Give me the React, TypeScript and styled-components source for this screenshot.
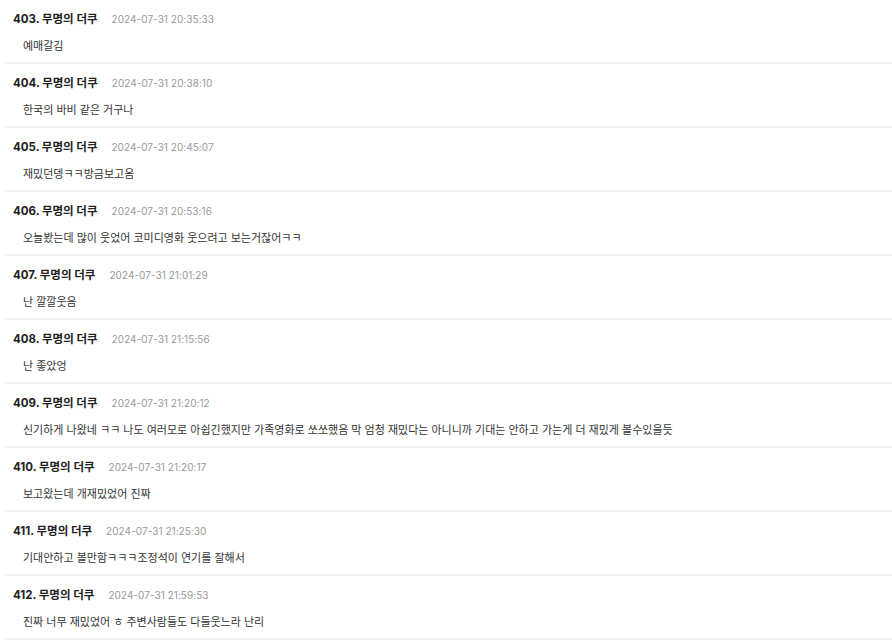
import React from 'react';
import styled, { createGlobalStyle } from 'styled-components';

type Comment = {
  no: number;
  author: string;
  date: string;
  body: string;
};

const comments: Comment[] = [
  { no: 403, author: '무명의 더쿠', date: '2024-07-31 20:35:33', body: '예매갈김' },
  { no: 404, author: '무명의 더쿠', date: '2024-07-31 20:38:10', body: '한국의 바비 같은 거구나' },
  { no: 405, author: '무명의 더쿠', date: '2024-07-31 20:45:07', body: '재밌던뎅ㅋㅋ방금보고옴' },
  { no: 406, author: '무명의 더쿠', date: '2024-07-31 20:53:16', body: '오늘봤는데 많이 웃었어 코미디영화 웃으려고 보는거잖어ㅋㅋ' },
  { no: 407, author: '무명의 더쿠', date: '2024-07-31 21:01:29', body: '난 깔깔웃음' },
  { no: 408, author: '무명의 더쿠', date: '2024-07-31 21:15:56', body: '난 좋았엉' },
  {
    no: 409,
    author: '무명의 더쿠',
    date: '2024-07-31 21:20:12',
    body: '신기하게 나왔네 ㅋㅋ 나도 여러모로 아쉽긴했지만 가족영화로 쏘쏘했음 막 엄청 재밌다는 아니니까 기대는 안하고 가는게 더 재밌게 볼수있을듯',
  },
  { no: 410, author: '무명의 더쿠', date: '2024-07-31 21:20:17', body: '보고왔는데 개재밌었어 진짜' },
  { no: 411, author: '무명의 더쿠', date: '2024-07-31 21:25:30', body: '기대안하고 볼만함ㅋㅋㅋ조정석이 연기를 잘해서' },
  { no: 412, author: '무명의 더쿠', date: '2024-07-31 21:59:53', body: '진짜 너무 재밌었어 ㅎ 주변사람들도 다들웃느라 난리' },
];

const GlobalStyle = createGlobalStyle`
  body {
    margin: 0;
    background: #ffffff;
    font-family: Inter, 'Noto Sans CJK KR', sans-serif;
  }
`;

const List = styled.ul`
  list-style: none;
  margin: 0 0 0 4px;
  padding: 0;
`;

const Item = styled.li`
  height: 64px;
  box-sizing: border-box;
  padding: 10px 0 0 9px;
  border-bottom: 2px solid #f3f3f3;
`;

const Header = styled.div`
  display: flex;
  align-items: baseline;
  gap: 14px;
  height: 18px;
  line-height: 18px;
`;

const Author = styled.span`
  font-size: 11.5px;
  font-weight: 700;
  color: #222222;
`;

const Date = styled.span`
  font-size: 10px;
  letter-spacing: 0.05px;
  color: #999999;
`;

const Body = styled.p`
  margin: 10px 0 0 10px;
  font-size: 11px;
  line-height: 16px;
  color: #333333;
`;

export default function App() {
  return (
    <>
      <GlobalStyle />
      <List>
        {comments.map((c) => (
          <Item key={c.no}>
            <Header>
              <Author>
                {c.no}. {c.author}
              </Author>
              <Date>{c.date}</Date>
            </Header>
            <Body>{c.body}</Body>
          </Item>
        ))}
      </List>
    </>
  );
}
